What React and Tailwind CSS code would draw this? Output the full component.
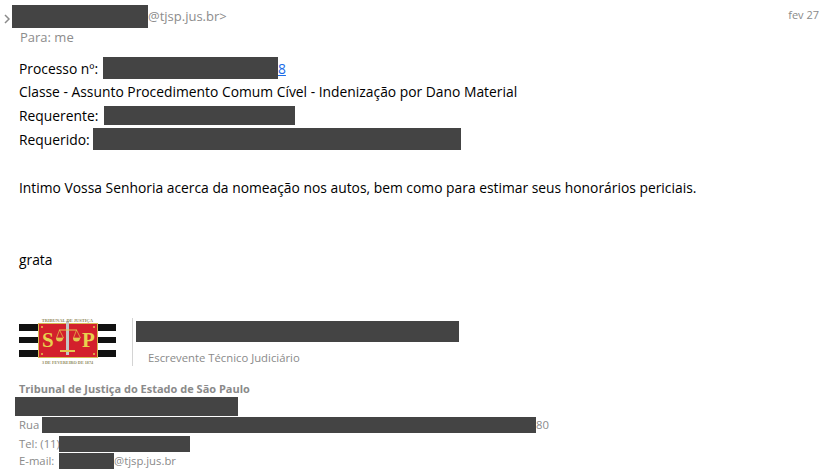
const font = { fontFamily: '"Open Sans", "Noto Sans", sans-serif' };

function Block({ className }) {
  return <span className={"block shrink-0 bg-[#444444] " + className}></span>;
}

function Logo() {
  return (
    <svg width="98" height="50" viewBox="0 0 98 50" className="shrink-0">
      <rect x="0" y="6" width="97" height="7" fill="#111" />
      <rect x="0" y="19" width="97" height="6" fill="#111" />
      <rect x="0" y="32" width="97" height="7" fill="#111" />
      <rect x="19" y="5" width="60" height="35" fill="#d8bb55" />
      <rect x="20" y="6" width="58" height="33" fill="#d3202c" />
      <rect x="47" y="3" width="3" height="34" fill="#c4c4c4" />
      <path d="M41 32h15v2h-15z" fill="#e2c84e" />
      <path d="M40 12h18" stroke="#e2c84e" strokeWidth="1" />
      <path d="M40.500 12l-3 8h7zM57.500 12l-3 8h7z" fill="none" stroke="#e2c84e" strokeWidth="0.7" />
      <path d="M37 20a3.500 3.500 0 0 0 7 0zM54 20a3.500 3.500 0 0 0 7 0z" fill="#e2c84e" />
      <circle cx="23" cy="9" r="1" fill="#e2c84e" />
      <circle cx="75" cy="9" r="1" fill="#e2c84e" />
      <circle cx="23" cy="36" r="1" fill="#e2c84e" />
      <circle cx="75" cy="36" r="1" fill="#e2c84e" />
      <text x="23" y="29" fontSize="21" fontWeight="700" fill="#e8d24e" fontFamily="Liberation Serif, serif">S</text>
      <text x="63" y="29" fontSize="21" fontWeight="700" fill="#e8d24e" fontFamily="Liberation Serif, serif">P</text>
      <text x="48.500" y="4" fontSize="4.500" fontWeight="700" textAnchor="middle" fill="#8f8a5c" fontFamily="Liberation Serif, serif">TRIBUNAL DE JUSTIÇA</text>
      <text x="48.500" y="46" fontSize="4.200" fontWeight="700" textAnchor="middle" fill="#8f8a5c" fontFamily="Liberation Serif, serif">3 DE FEVEREIRO DE 1874</text>
    </svg>
  );
}

export default function App() {
  return (
    <div className="w-[829px] h-[476px] bg-white overflow-hidden relative whitespace-nowrap" style={font}>
      {/* header */}
      <div className="flex items-center h-[23px] mt-[5px] pl-[4px] pr-[10px] text-[13px] text-[#8c8c8c]">
        <svg width="6" height="10" viewBox="0 0 6 10" className="mt-[4px] mr-[2px] shrink-0">
          <path d="M1 1l4 4-4 4" fill="none" stroke="#8a8a8a" strokeWidth="1.500" />
        </svg>
        <Block className="w-[136px] h-[23px]" />
        <span>@tjsp.jus.br&gt;</span>
        <span className="ml-auto text-[11px] text-[#8a8a8a] mt-[-3px]">fev 27</span>
      </div>
      <div className="h-[18px] mt-[1px] pl-[20px] flex items-center text-[13px] text-[#8c8c8c]">Para: me</div>

      {/* body */}
      <div className="pl-[19px] mt-[10px] text-[13.85px] text-black">
        <div className="flex items-center h-[22px]">
          <span className="w-[84px] pt-[2px]">Processo nº:</span>
          <Block className="w-[175px] h-[22px]" />
          <a href="#" className="underline text-[#1a6ce8] pt-[2px]">8</a>
        </div>
        <div className="flex items-center h-[24px] pt-[2px]">Classe - Assunto Procedimento Comum Cível - Indenização por Dano Material</div>
        <div className="flex items-center h-[24px]">
          <span className="w-[85px] pt-[2px]">Requerente:</span>
          <Block className="w-[191px] h-[19px]" />
        </div>
        <div className="flex items-center h-[24px]">
          <span className="w-[74px] pt-[2px]">Requerido:</span>
          <Block className="w-[368px] h-[22px]" />
        </div>
        <div className="flex items-center h-[24px] mt-[24px] pt-[2px]">Intimo Vossa Senhoria acerca da nomeação nos autos, bem como para estimar seus honorários periciais.</div>
        <div className="flex items-center h-[24px] mt-[48px] pt-[2px]">grata</div>
      </div>

      {/* signature */}
      <div className="flex mt-[47px] pl-[19px] h-[50px]">
        <Logo />
        <div className="w-px h-[48px] bg-[#d4d4d4] ml-[15px] mr-[3px]"></div>
        <div className="flex flex-col">
          <Block className="w-[323px] h-[21px] mt-[3px]" />
          <span className="ml-[12px] mt-[8px] text-[11.3px] text-[#8a8a8a]">Escrevente Técnico Judiciário</span>
        </div>
      </div>
      <div className="mt-[14px] text-[11.3px] text-[#8a8a8a]">
        <div className="pl-[19px] h-[15px] flex items-center font-bold text-[11px]">Tribunal de Justiça do Estado de São Paulo</div>
        <Block className="w-[223px] h-[19px] ml-[15px]" />
        <div className="flex items-center h-[16px] mt-[1px] pl-[19px]">
          <span className="w-[23px]">Rua</span>
          <Block className="w-[494px] h-[16px]" />
          <span>80</span>
        </div>
        <div className="flex items-center h-[16px] mt-[3px] pl-[19px]">
          <span className="w-[40px]">Tel: (11)</span>
          <Block className="w-[131px] h-[16px]" />
        </div>
        <div className="flex items-center h-[16px] mt-[1px] pl-[19px]">
          <span className="w-[40px]">E-mail:</span>
          <Block className="w-[55px] h-[16px]" />
          <span>@tjsp.jus.br</span>
        </div>
      </div>
    </div>
  );
}
